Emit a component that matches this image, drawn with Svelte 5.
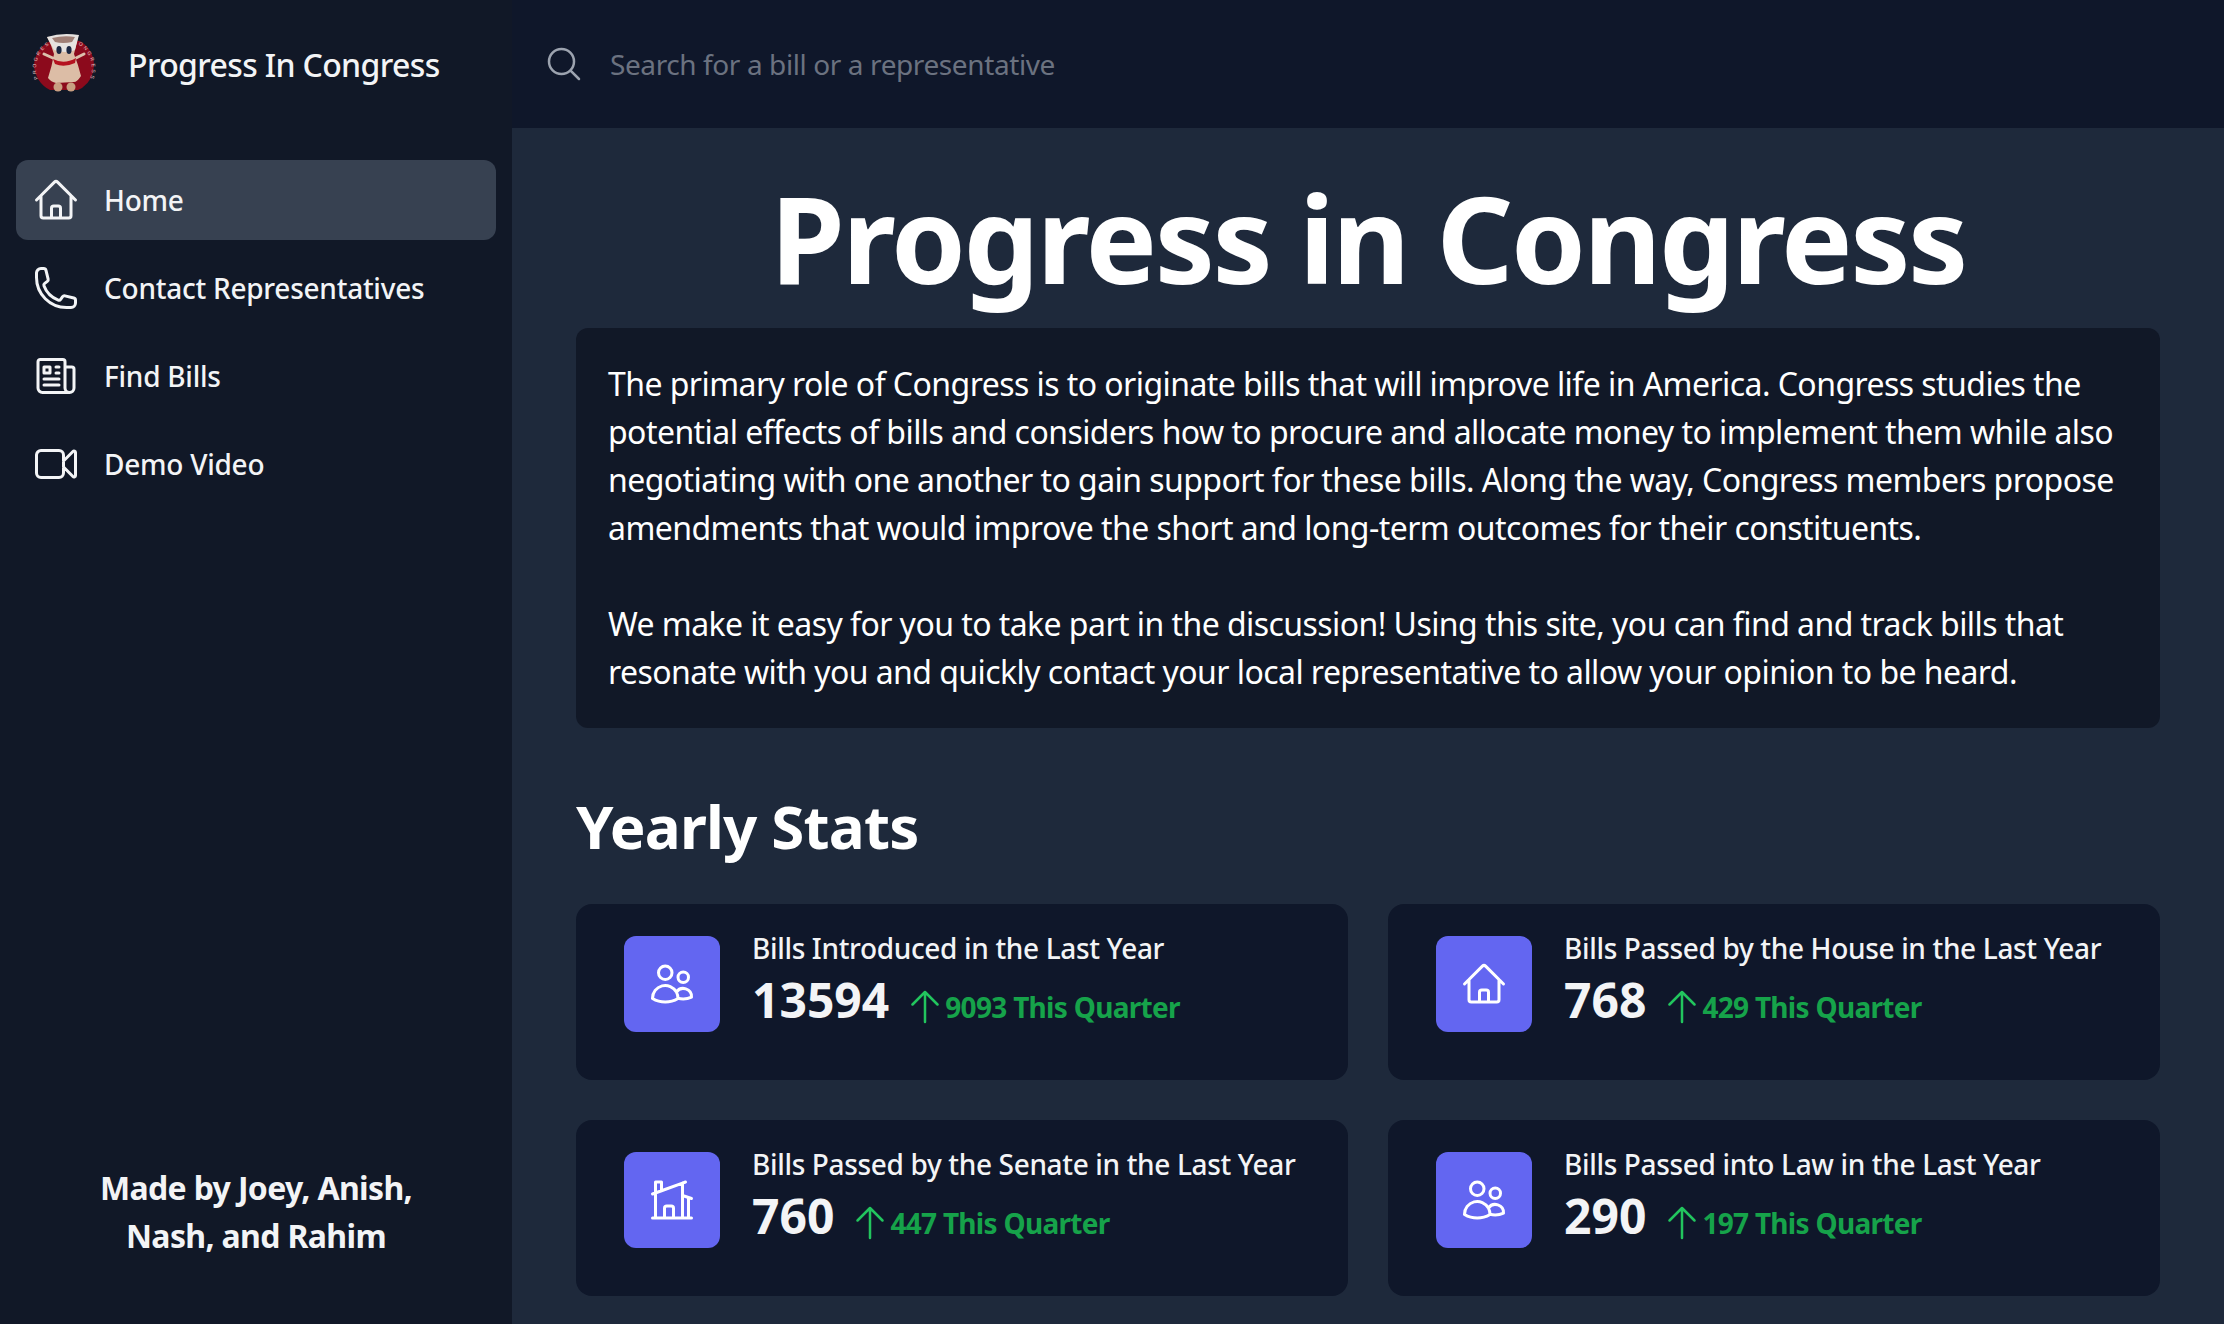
<script>
  const nav = [
    { label: 'Home', active: true, d: 'm2.25 12 8.954-8.955c.44-.439 1.152-.439 1.591 0L21.75 12M4.5 9.75v10.125c0 .621.504 1.125 1.125 1.125H9.75v-4.875c0-.621.504-1.125 1.125-1.125h2.25c.621 0 1.125.504 1.125 1.125V21h4.125c.621 0 1.125-.504 1.125-1.125V9.75M8.25 21h8.25' },
    { label: 'Contact Representatives', d: 'M2.25 6.75c0 8.284 6.716 15 15 15h2.25a2.25 2.25 0 0 0 2.25-2.25v-1.372c0-.516-.351-.966-.852-1.091l-4.423-1.106c-.44-.11-.902.055-1.173.417l-.97 1.293c-.282.376-.769.542-1.21.38a12.035 12.035 0 0 1-7.143-7.143c-.162-.441.004-.928.38-1.21l1.293-.97c.363-.271.527-.734.417-1.173L6.963 3.102a1.125 1.125 0 0 0-1.091-.852H4.5A2.25 2.25 0 0 0 2.25 4.5v2.25Z' },
    { label: 'Find Bills', d: 'M12 7.5h1.5m-1.5 3h1.5m-7.5 3h7.5m-7.5 3h7.5m3-9h3.375c.621 0 1.125.504 1.125 1.125V18a2.25 2.25 0 0 1-2.25 2.25M16.5 7.5V18a2.25 2.25 0 0 0 2.25 2.25M16.5 7.5V4.875c0-.621-.504-1.125-1.125-1.125H4.125C3.504 3.75 3 4.254 3 4.875V18a2.25 2.25 0 0 0 2.25 2.25h13.5M6 7.5h3v3H6v-3Z' },
    { label: 'Demo Video', d: 'm15.75 10.5 4.72-4.72a.75.75 0 0 1 1.28.53v11.38a.75.75 0 0 1-1.28.53l-4.72-4.72M4.5 18.75h9a2.25 2.25 0 0 0 2.25-2.25v-9a2.25 2.25 0 0 0-2.25-2.25h-9A2.25 2.25 0 0 0 2.25 7.5v9a2.25 2.25 0 0 0 2.25 2.25Z' }
  ];
  const users = 'M15 19.128a9.38 9.38 0 0 0 2.625.372 9.337 9.337 0 0 0 4.121-.952 4.125 4.125 0 0 0-7.533-2.493M15 19.128v-.003c0-1.113-.285-2.16-.786-3.07M15 19.128v.106A12.318 12.318 0 0 1 8.624 21c-2.331 0-4.512-.645-6.374-1.766l-.001-.109a6.375 6.375 0 0 1 11.964-3.07M12 6.375a3.375 3.375 0 1 1-6.75 0 3.375 3.375 0 0 1 6.75 0Zm8.25 2.25a2.625 2.625 0 1 1-5.25 0 2.625 2.625 0 0 1 5.25 0Z';
  const house = nav[0].d;
  const modern = 'M8.25 21v-4.875c0-.621.504-1.125 1.125-1.125h2.25c.621 0 1.125.504 1.125 1.125V21m0 0h4.5V3.545M12.75 21h7.5V10.75M2.25 21h1.5m18 0h-18M2.25 9l4.5-1.636M18.75 3l-1.5.545m0 6.205 3 1m1.5.5-1.5-.5M6.75 7.364V3h-3v18m3-13.636 10.5-3.819';
  const stats = [
    { title: 'Bills Introduced in the Last Year', value: '13594', delta: '9093 This Quarter', d: users },
    { title: 'Bills Passed by the House in the Last Year', value: '768', delta: '429 This Quarter', d: house },
    { title: 'Bills Passed by the Senate in the Last Year', value: '760', delta: '447 This Quarter', d: modern },
    { title: 'Bills Passed into Law in the Last Year', value: '290', delta: '197 This Quarter', d: users }
  ];
</script>

<div class="shell">
  <aside class="sidebar">
    <div class="brand">
      <svg class="logo" viewBox="0 0 64 64" aria-hidden="true">
        <defs>
          <path id="ring" d="M6 47 A28 28 0 1 1 58 47" />
        </defs>
        <path d="M2 33 A29 29 0 0 1 18 9 L48 9 A29 29 0 0 1 62 33 A29 29 0 0 1 50 56 L46 58 L18 58 A29 29 0 0 1 2 33Z" fill="#8c0a1c" />
        <text class="ringtext" textLength="108"><textPath href="#ring" textLength="108">PROGRESS IN CONGRESS</textPath></text>
        <path d="M15 5 L46 3 Q45 10 42 22 Q46 32 49 44 Q45 50 42 50 L24 51 Q19 50 16 46 Q20 34 22 22 Q19 12 15 5Z" fill="#dcbda6" />
        <path d="M15 5 Q30 0 47 3 L43 18 Q34 22 22 18Z" fill="#e6e2e0" />
        <path d="M20 6 Q32 3 43 5 L40 10 Q31 12 23 10Z" fill="#a07f76" />
        <path d="M23 27 L12 22 M42 27 L52 22" stroke="#dcc0ac" stroke-width="3" stroke-linecap="round" fill="none" />
        <ellipse cx="27" cy="18" rx="2.6" ry="4" fill="#1b2742" />
        <ellipse cx="37" cy="18" rx="2.6" ry="4" fill="#1b2742" />
        <path d="M21 27 Q32 33 44 26 L43 31 Q32 36 23 32Z" fill="#b5121f" />
        <ellipse cx="26" cy="55" rx="4.5" ry="4.5" fill="#c99f82" />
        <ellipse cx="39" cy="55" rx="4.5" ry="4.5" fill="#c99f82" />
      </svg>
      <span class="brand-name">Progress In Congress</span>
    </div>
    <nav class="nav">
      {#each nav as item}
        <a class="nav-item" class:active={item.active} href="#top">
          <svg class="icon" viewBox="0 0 24 24"><path d={item.d} /></svg>
          <span>{item.label}</span>
        </a>
      {/each}
    </nav>
    <p class="credit">Made by Joey, Anish,<br />Nash, and Rahim</p>
  </aside>

  <div class="page">
    <header class="topbar">
      <svg class="search-icon" viewBox="0 0 24 24"><path d="m21 21-5.197-5.197m0 0A7.5 7.5 0 1 0 5.196 5.196a7.5 7.5 0 0 0 10.607 10.607Z" /></svg>
      <input class="search" type="text" placeholder="Search for a bill or a representative" />
    </header>
    <main class="main">
      <h1>Progress in Congress</h1>
      <section class="intro">
        <p>The primary role of Congress is to originate bills that will improve life in America. Congress studies the<br />potential effects of bills and considers how to procure and allocate money to implement them while also<br />negotiating with one another to gain support for these bills. Along the way, Congress members propose<br />amendments that would improve the short and long-term outcomes for their constituents.</p>
        <p>We make it easy for you to take part in the discussion! Using this site, you can find and track bills that<br />resonate with you and quickly contact your local representative to allow your opinion to be heard.</p>
      </section>
      <h2>Yearly Stats</h2>
      <div class="grid">
        {#each stats as s}
          <article class="card">
            <div class="badge"><svg class="icon" viewBox="0 0 24 24"><path d={s.d} /></svg></div>
            <div class="info">
              <div class="card-title">{s.title}</div>
              <div class="figures">
                <span class="value">{s.value}</span>
                <svg class="arrow" viewBox="0 0 24 24"><path d="M4.5 10.5 12 3m0 0 7.5 7.5M12 3v18" /></svg>
                <span class="delta">{s.delta}</span>
              </div>
            </div>
          </article>
        {/each}
      </div>
    </main>
  </div>
</div>

<style>
  :global(body) {
    margin: 0;
    background: #1e293b;
  }
  .shell {
    display: flex;
    height: 1324px;
    overflow: hidden;
    font-family: "Noto Sans", sans-serif;
    color: #fff;
  }
  .sidebar {
    width: 512px;
    flex: none;
    display: flex;
    flex-direction: column;
    background: #111827;
  }
  .brand {
    height: 128px;
    display: flex;
    align-items: center;
    gap: 32px;
    padding-left: 32px;
  }
  .logo {
    width: 64px;
    height: 64px;
  }
  .ringtext {
    font-size: 5px;
    fill: #e9c9c9;
    font-family: "Liberation Sans", sans-serif;
  }
  .brand-name {
    font-size: 32px;
    font-weight: 500;
    letter-spacing: -0.64px;
    color: #f3f4f6;
  }
  .nav {
    display: flex;
    flex-direction: column;
    gap: 8px;
    padding: 32px 16px 0;
  }
  .nav-item {
    height: 80px;
    display: flex;
    align-items: center;
    gap: 24px;
    padding-left: 16px;
    border-radius: 12px;
    font-size: 28px;
    font-weight: 500;
    letter-spacing: -0.25px;
    color: #f3f4f6;
    text-decoration: none;
  }
  .nav-item.active {
    background: #374151;
  }
  .icon {
    width: 48px;
    height: 48px;
    flex: none;
    fill: none;
    stroke: currentColor;
    stroke-width: 1.5;
    stroke-linecap: round;
    stroke-linejoin: round;
  }
  .credit {
    margin: auto 32px 64px;
    text-align: center;
    font-size: 32px;
    line-height: 48px;
    font-weight: 700;
    letter-spacing: -0.65px;
    color: #f3f4f6;
  }
  .page {
    flex: 1;
    min-width: 0;
    display: flex;
    flex-direction: column;
  }
  .topbar {
    height: 128px;
    flex: none;
    display: flex;
    align-items: center;
    gap: 26px;
    padding-left: 32px;
    background: #0f172a;
  }
  .search-icon {
    width: 40px;
    height: 40px;
    flex: none;
    fill: none;
    stroke: #9ca3af;
    stroke-width: 1.5;
    stroke-linecap: round;
    stroke-linejoin: round;
  }
  .search {
    flex: 1;
    border: 0;
    outline: 0;
    padding: 0;
    background: transparent;
    font: inherit;
    font-size: 28px;
    letter-spacing: -0.4px;
    color: #fff;
  }
  .search::placeholder {
    color: #6b7280;
    opacity: 1;
  }
  .main {
    padding: 50px 64px 0;
  }
  h1 {
    margin: 0 0 30px;
    text-align: center;
    font-size: 120px;
    line-height: 120px;
    font-weight: 700;
    letter-spacing: -2.5px;
    color: #fff;
  }
  .intro {
    padding: 32px;
    background: #111827;
    border-radius: 12px;
    font-size: 32px;
    line-height: 48px;
    letter-spacing: -0.56px;
    color: #fff;
  }
  .intro p {
    margin: 0;
  }
  .intro p + p {
    margin-top: 48px;
  }
  h2 {
    margin: 62px 0 42px;
    font-size: 60px;
    line-height: 72px;
    font-weight: 700;
    letter-spacing: -0.8px;
    color: #fff;
  }
  .grid {
    display: grid;
    grid-template-columns: minmax(0, 1fr) minmax(0, 1fr);
    gap: 40px;
  }
  .card {
    display: flex;
    gap: 32px;
    padding: 32px 48px 48px;
    background: #0f172a;
    border-radius: 16px;
  }
  .badge {
    width: 96px;
    height: 96px;
    flex: none;
    display: flex;
    align-items: center;
    justify-content: center;
    background: #6366f1;
    border-radius: 12px;
    color: #fff;
  }
  .info {
    min-width: 0;
  }
  .card-title {
    font-size: 28px;
    line-height: 24px;
    font-weight: 500;
    letter-spacing: -0.34px;
    color: #f3f4f6;
    white-space: nowrap;
  }
  .figures {
    height: 64px;
    margin-top: 8px;
    display: flex;
    align-items: baseline;
  }
  .value {
    font-size: 48px;
    line-height: 64px;
    font-weight: 700;
    color: #f3f4f6;
  }
  .arrow {
    width: 40px;
    height: 40px;
    flex: none;
    align-self: flex-end;
    margin: 0 0 5px 16px;
    fill: none;
    stroke: #22c55e;
    stroke-width: 1.5;
    stroke-linecap: round;
    stroke-linejoin: round;
  }
  .delta {
    font-size: 28px;
    font-weight: 700;
    letter-spacing: -0.7px;
    color: #16a34a;
  }
</style>
